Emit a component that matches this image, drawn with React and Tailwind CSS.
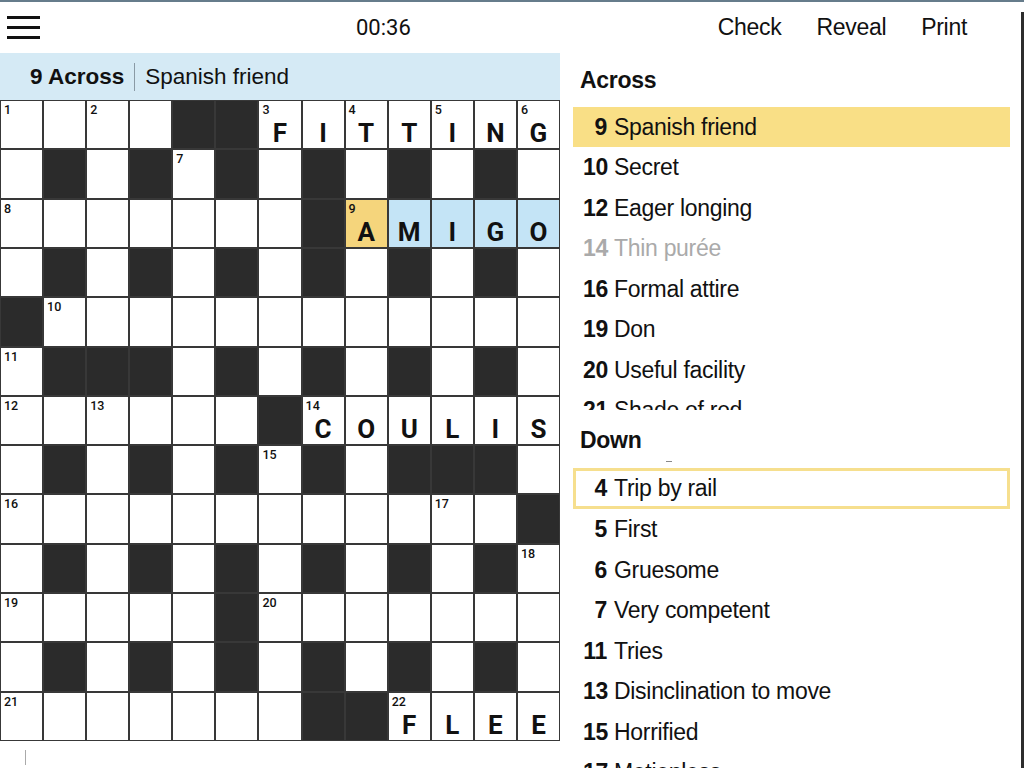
import React from "react";

const ROWS = [
  "....##FITTING",
  ".#.#.#.#.#.#.",
  ".......#AMIGO",
  ".#.#.#.#.#.#.",
  "#............",
  ".###.#.#.#.#.",
  "......#COULIS",
  ".#.#.#.#.###.",
  "............#",
  ".#.#.#.#.#.#.",
  ".....#.......",
  ".#.#.#.#.#.#.",
  ".......##FLEE",
];

const NUMBERS = {
  "0,0": 1, "0,2": 2, "0,6": 3, "0,8": 4, "0,10": 5, "0,12": 6,
  "1,4": 7, "2,0": 8, "2,8": 9, "4,1": 10, "5,0": 11, "6,0": 12,
  "6,2": 13, "6,7": 14, "7,6": 15, "8,0": 16, "8,10": 17, "9,12": 18,
  "10,0": 19, "10,6": 20, "12,0": 21, "12,9": 22,
};

const across = [
  { n: 9, text: "Spanish friend", active: true },
  { n: 10, text: "Secret" },
  { n: 12, text: "Eager longing" },
  { n: 14, text: "Thin purée", done: true },
  { n: 16, text: "Formal attire" },
  { n: 19, text: "Don" },
  { n: 20, text: "Useful facility" },
  { n: 21, text: "Shade of red" },
];

const down = [
  { n: 4, text: "Trip by rail", related: true },
  { n: 5, text: "First" },
  { n: 6, text: "Gruesome" },
  { n: 7, text: "Very competent" },
  { n: 11, text: "Tries" },
  { n: 13, text: "Disinclination to move" },
  { n: 15, text: "Horrified" },
  { n: 17, text: "Motionless" },
];

function Cell({ ch, r, c }) {
  if (ch === "#") return <div className="bg-[#2b2b2b]" />;
  const num = NUMBERS[`${r},${c}`];
  let bg = "bg-white";
  if (r === 2 && c === 8) bg = "bg-[#f5d57c]";
  else if (r === 2 && c > 8) bg = "bg-[#c4e4f6]";
  return (
    <div className={`relative flex items-end justify-center pb-[2px] ${bg}`}>
      {num && (
        <span className="absolute left-[3px] top-[3px] text-[12.5px] leading-none font-medium text-[#111]">
          {num}
        </span>
      )}
      {ch !== "." && (
        <span className="text-[26px] leading-none font-bold text-[#111]">{ch}</span>
      )}
    </div>
  );
}

function ClueRow({ clue }) {
  let box = "h-[40.5px] pl-[10px]";
  if (clue.active) box = "h-[40px] pl-[10px] bg-[#f9df86]";
  if (clue.related) box = "h-[41px] border-[3px] border-[#f6df8e] pl-[7px]";
  const color = clue.done ? "text-[#aaaaaa]" : "text-[#111]";
  return (
    <div className={`flex items-center ml-[13px] mr-[11px] ${box} ${color}`}>
      <span className="w-[24px] text-right font-bold">{clue.n}</span>
      <span className="ml-[7px] whitespace-nowrap">{clue.text}</span>
    </div>
  );
}

export default function App() {
  return (
    <div className="w-[1024px] h-[768px] overflow-hidden bg-white border-t-2 border-[#667c8b] font-['Liberation_Sans',Arial,sans-serif] text-[#111]">
      <div className="flex h-full">
        <div className="flex-1 flex flex-col">
          {/* top bar */}
          <div className="h-[51px] flex items-center shrink-0">
            <div className="ml-[7px] w-[33px] flex flex-col gap-[6.5px]">
              <div className="h-[3.5px] bg-[#111]" />
              <div className="h-[3.5px] bg-[#111]" />
              <div className="h-[3.5px] bg-[#111]" />
            </div>
            <span className="ml-[316px] text-[22px] font-['Roboto',sans-serif]">00:36</span>
            <div className="ml-auto mr-[54px] flex gap-[35px] text-[23px] tracking-[-0.3px]">
              <span>Check</span>
              <span>Reveal</span>
              <span>Print</span>
            </div>
          </div>

          <div className="flex flex-1 min-h-0">
            {/* left: clue bar + grid */}
            <div className="w-[560px] flex flex-col">
              <div className="h-[47px] bg-[#d5eaf5] flex items-center pl-[30px] text-[22.5px]">
                <span className="font-bold">9 Across</span>
                <span className="mx-[10px] w-px h-[28px] bg-[#8a9aa5]" />
                <span>Spanish friend</span>
              </div>
              <div className="w-[560px] h-[641px] grid grid-cols-[repeat(13,1fr)] grid-rows-[repeat(13,1fr)] gap-[2px] p-px bg-[#383838] font-['Roboto',sans-serif]">
                {ROWS.map((row, r) =>
                  row.split("").map((ch, c) => <Cell key={`${r}-${c}`} ch={ch} r={r} c={c} />)
                )}
              </div>
              <div className="ml-[25px] mt-[9px] w-px h-[15px] bg-[#aaa]" />
            </div>

            {/* right: clue lists */}
            <div className="flex-1 flex flex-col text-[23px] tracking-[-0.3px]">
              <div className="h-[54px] flex items-center pl-[20px] font-bold">Across</div>
              <div className="h-[303px] overflow-hidden">
                {across.map((c) => (
                  <ClueRow key={c.n} clue={c} />
                ))}
              </div>
              <div className="h-[58px] flex flex-col pl-[20px]">
                <span className="mt-[19px] leading-[23px] font-bold">Down</span>
                <span className="mt-[9px] ml-[86px] w-[6px] h-px bg-[#888]" />
              </div>
              <div className="flex-1 overflow-hidden">
                {down.map((c) => (
                  <ClueRow key={c.n} clue={c} />
                ))}
              </div>
            </div>
          </div>
        </div>
        <div className="w-[3px] h-[763px] bg-[#2d2d2d] rounded-br-[6px] mt-[10px]" />
      </div>
    </div>
  );
}
